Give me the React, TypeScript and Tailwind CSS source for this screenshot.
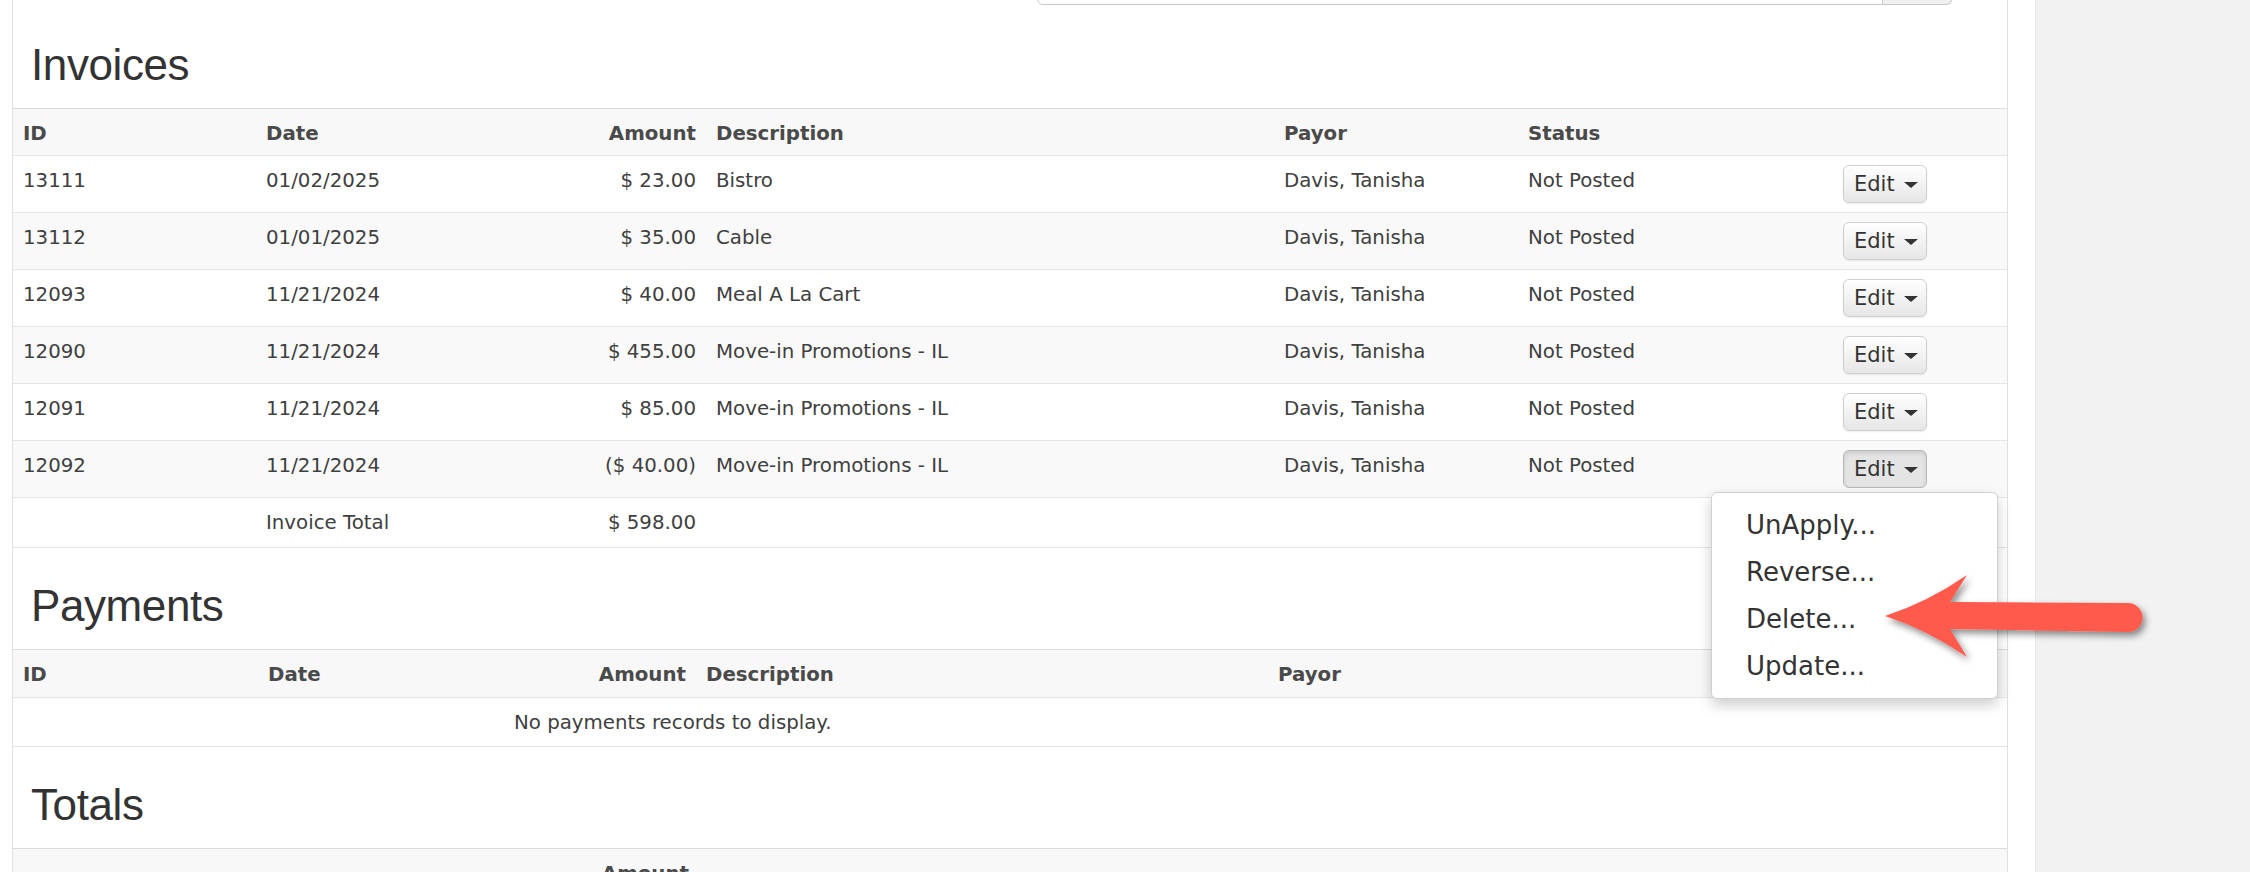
import React from 'react';

const invoices = [
    { id: '13111', date: '01/02/2025', amount: '$ 23.00', desc: 'Bistro', payor: 'Davis, Tanisha', status: 'Not Posted' },
    { id: '13112', date: '01/01/2025', amount: '$ 35.00', desc: 'Cable', payor: 'Davis, Tanisha', status: 'Not Posted' },
    { id: '12093', date: '11/21/2024', amount: '$ 40.00', desc: 'Meal A La Cart', payor: 'Davis, Tanisha', status: 'Not Posted' },
    { id: '12090', date: '11/21/2024', amount: '$ 455.00', desc: 'Move-in Promotions - IL', payor: 'Davis, Tanisha', status: 'Not Posted' },
    { id: '12091', date: '11/21/2024', amount: '$ 85.00', desc: 'Move-in Promotions - IL', payor: 'Davis, Tanisha', status: 'Not Posted' },
    { id: '12092', date: '11/21/2024', amount: '($ 40.00)', desc: 'Move-in Promotions - IL', payor: 'Davis, Tanisha', status: 'Not Posted' },
];

const invoiceCols = 'grid grid-cols-[243px_264px_186px_568px_244px_315px_1fr]';
const paymentCols = 'grid grid-cols-[245px_258px_180px_572px_244px_1fr]';
const totalCols = 'grid grid-cols-[245px_258px_183px_1fr]';

const cell = 'px-[10px] pt-[11px] leading-[28px] whitespace-nowrap';
const head = 'px-[10px] pt-[11px] leading-[28px] font-bold text-[#4a4a4a] whitespace-nowrap';

const EditButton: React.FC<{ active?: boolean }> = ({ active }) => (
    <button
        className={`flex items-center gap-[9px] h-[38px] w-[84px] pl-[10px] rounded-[6px] border text-[21px] text-[#333] ${active
            ? 'bg-[#e4e4e4] border-[#b8b8b8] shadow-[inset_0_2px_4px_rgba(0,0,0,0.12)]'
            : 'bg-gradient-to-b from-white to-[#e6e6e6] border-[#cfcfcf] shadow-[0_1px_2px_rgba(0,0,0,0.08)]'
            }`}
    >
        <span className="leading-none">Edit</span>
        <span className="w-0 h-0 border-x-[7px] border-x-transparent border-t-[6px] border-t-[#333] mt-[2px]"></span>
    </button>
);

const SectionTitle: React.FC<{ children: React.ReactNode; className?: string }> = ({ children, className }) => (
    <h2 className={`h-[44px] leading-[44px] text-[44px] tracking-[-0.4px] text-[#333] pl-[18px] mb-[21px] font-['Liberation_Sans',Arial,sans-serif] ${className ?? ''}`}>
        {children}
    </h2>
);

const App: React.FC = () => {
    return (
        <div className="relative w-[2250px] h-[872px] overflow-hidden bg-white flex font-['DejaVu_Sans',Verdana,sans-serif] text-[19.8px] text-[#404040]">
            {/* Main panel */}
            <div className="ml-[12px] w-[1996px] shrink-0 border-x border-[#e0e0e0]">
                {/* Search bar (scrolled off the top) */}
                <div className="flex justify-end pr-[55px]">
                    <div className="flex h-[40px] -mt-[35px]">
                        <div className="w-[846px] h-full bg-white border border-[#c8c8c8] rounded-bl-[6px]"></div>
                        <div className="w-[69px] h-full bg-[#f0f0f0] border border-l-0 border-[#c8c8c8] rounded-br-[6px]"></div>
                    </div>
                </div>

                {/* Invoices */}
                <SectionTitle className="mt-[38px]">Invoices</SectionTitle>
                <div className="border-b border-[#e4e4e4]">
                    <div className={`${invoiceCols} h-[47px] bg-[#f8f8f8] border-t border-[#dcdcdc]`}>
                        <div className={head}>ID</div>
                        <div className={head}>Date</div>
                        <div className={`${head} text-right`}>Amount</div>
                        <div className={head}>Description</div>
                        <div className={head}>Payor</div>
                        <div className={head}>Status</div>
                        <div></div>
                    </div>
                    {invoices.map((inv, i) => (
                        <div
                            key={inv.id}
                            className={`${invoiceCols} h-[57px] border-t border-[#e6e6e6] ${i % 2 === 1 ? 'bg-[#f9f9f9]' : 'bg-white'}`}
                        >
                            <div className={cell}>{inv.id}</div>
                            <div className={cell}>{inv.date}</div>
                            <div className={`${cell} text-right`}>{inv.amount}</div>
                            <div className={cell}>{inv.desc}</div>
                            <div className={cell}>{inv.payor}</div>
                            <div className={cell}>{inv.status}</div>
                            <div className="px-[10px] pt-[9px]">
                                <EditButton active={i === invoices.length - 1} />
                            </div>
                        </div>
                    ))}
                    <div className={`${invoiceCols} h-[50px] border-t border-[#e6e6e6] bg-white`}>
                        <div className={cell}></div>
                        <div className={cell}>Invoice Total</div>
                        <div className={`${cell} text-right`}>$ 598.00</div>
                        <div></div>
                        <div></div>
                        <div></div>
                        <div></div>
                    </div>
                </div>

                {/* Payments */}
                <SectionTitle className="mt-[36px]">Payments</SectionTitle>
                <div className="border-b border-[#e4e4e4]">
                    <div className={`${paymentCols} h-[48px] bg-[#f8f8f8] border-t border-[#dcdcdc]`}>
                        <div className={head}>ID</div>
                        <div className={head}>Date</div>
                        <div className={`${head} text-right`}>Amount</div>
                        <div className={head}>Description</div>
                        <div className={head}>Payor</div>
                        <div></div>
                    </div>
                    <div className="h-[49px] border-t border-[#e6e6e6] bg-white">
                        <div className={`${cell} pl-[501px]`}>No payments records to display.</div>
                    </div>
                </div>

                {/* Totals */}
                <SectionTitle className="mt-[36px]">Totals</SectionTitle>
                <div>
                    <div className={`${totalCols} h-[47px] bg-[#f8f8f8] border-t border-[#dcdcdc]`}>
                        <div className={head}></div>
                        <div className={head}></div>
                        <div className={`${head} text-right`}>Amount</div>
                        <div></div>
                    </div>
                </div>
            </div>

            {/* Gap + right sidebar */}
            <div className="w-[27px] shrink-0 bg-white"></div>
            <div className="flex-1 bg-[#f2f2f2] border-l border-[#e6e6e6]"></div>

            {/* Open dropdown menu */}
            <div className="absolute left-[1711px] top-[492px] w-[287px] h-[207px] bg-white border border-[#d0d0d0] rounded-[6px] shadow-[0_6px_14px_rgba(0,0,0,0.2)] pt-[9px] pl-[34px] text-[26px] text-[#333]">
                <div className="leading-[47px]">UnApply...</div>
                <div className="leading-[47px]">Reverse...</div>
                <div className="leading-[47px]">Delete...</div>
                <div className="leading-[47px]">Update...</div>
            </div>

            {/* Annotation arrow */}
            <svg className="absolute left-[1870px] top-[560px]" width="300" height="120" viewBox="0 0 300 120">
                <defs>
                    <filter id="arrowShadow" x="-20%" y="-30%" width="140%" height="170%">
                        <feDropShadow dx="3" dy="4" stdDeviation="3.5" floodColor="#000" floodOpacity="0.45" />
                    </filter>
                </defs>
                <path
                    d="M15 56 Q58 42 97 15 L80 42 L258 43 A14.5 14.5 0 0 1 258 72 L80 69 L97 97 Q58 70 15 56 Z"
                    fill="#FF5A4C"
                    filter="url(#arrowShadow)"
                />
            </svg>
        </div>
    );
};

export default App;
